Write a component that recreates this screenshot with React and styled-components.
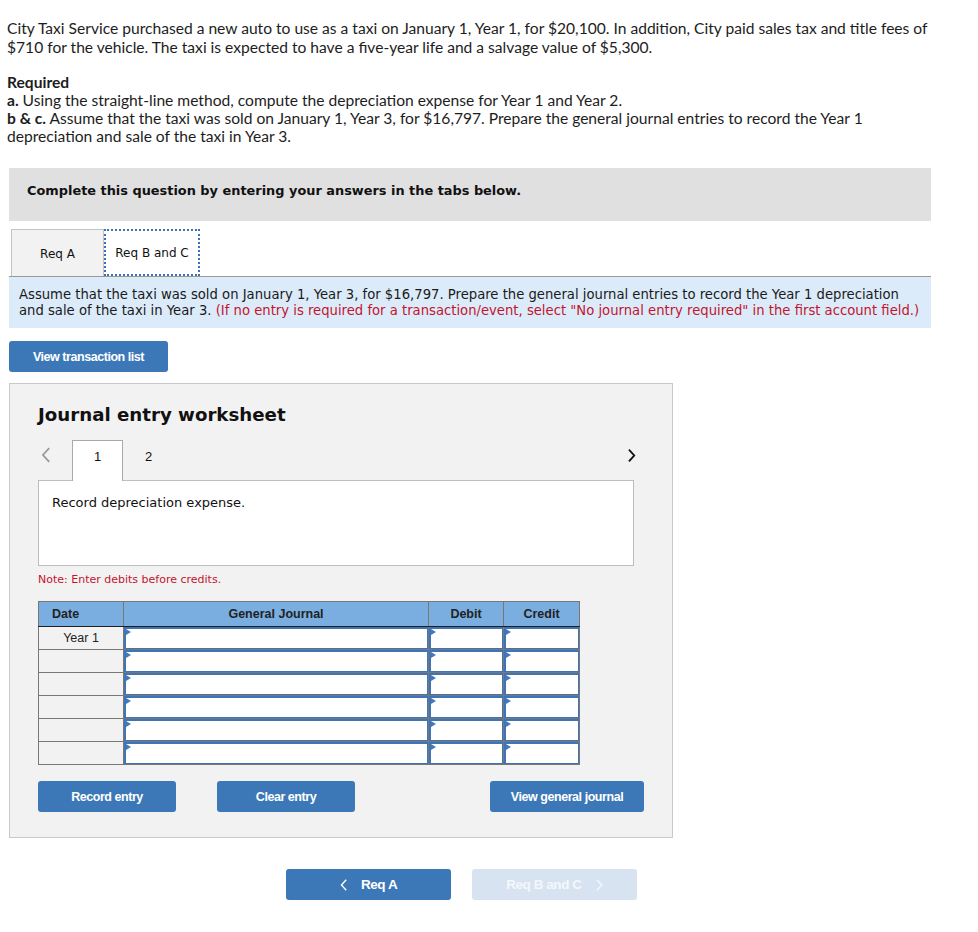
import React from "react";
import styled, { createGlobalStyle } from "styled-components";

const Global = createGlobalStyle`
  html, body { margin: 0; padding: 0; background: #fff; }
  body { font-family: "Lato", "Liberation Sans", sans-serif; color: #1a1a1a; }
  * { box-sizing: border-box; }
`;

const Page = styled.div`
  width: 978px;
  padding: 19px 47px 32px 9px;
`;

const Prose = styled.div`
  margin-left: -2px;
  font-family: "Lato", "Liberation Sans", sans-serif;
  font-size: 15.6px;
  color: #1d1d1d;
`;

const Para = styled.p`
  margin: 0 0 ${(p) => p.$gap || 0}px;
  line-height: ${(p) => p.$lh || 19}px;
`;

const Bold = styled.b`
  font-weight: 700;
`;

const Banner = styled.div`
  margin-top: 23px;
  height: 53px;
  background: #e0e0e0;
  padding: 14px 18px 0;
  font-family: "DejaVu Sans", Verdana, sans-serif;
  font-weight: 700;
  font-size: 12.9px;
  line-height: 18px;
  color: #111;
`;

const TabBar = styled.div`
  margin-top: 8px;
  display: flex;
  padding-left: 2px;
  border-bottom: 1px solid #9a9a9a;
`;

const Tab = styled.div`
  width: ${(p) => p.$w}px;
  height: 47px;
  display: flex;
  align-items: center;
  justify-content: center;
  padding-top: 1px;
  font-family: "DejaVu Sans", Verdana, sans-serif;
  font-size: 12px;
  color: #111;
  background: ${(p) => (p.$active ? "#fff" : "#f2f2f2")};
  border: ${(p) => (p.$active ? "2px dotted #3d6fb6" : "1px solid #c4c4c4")};
  border-bottom: ${(p) => (p.$active ? "2px dotted #3d6fb6" : "none")};
`;

const Info = styled.div`
  background: #dcebf9;
  padding: 10px 10px 9px;
  font-family: "DejaVu Sans", Verdana, sans-serif;
  font-size: 13.2px;
  line-height: 16px;
  color: #1a1a1a;
`;

const Red = styled.span`
  color: #c3142d;
`;

const Button = styled.button`
  display: inline-flex;
  align-items: center;
  justify-content: center;
  gap: 14px;
  width: ${(p) => p.$w}px;
  height: 31px;
  border: none;
  border-radius: 3px;
  background: ${(p) => (p.$disabled ? "#d7e3f1" : "#3c78b7")};
  color: ${(p) => (p.$disabled ? "#f4f7fb" : "#fff")};
  font-family: "Liberation Sans", Arial, sans-serif;
  font-weight: 700;
  font-size: ${(p) => p.$fs || 12.5}px;
  letter-spacing: -0.45px;
  padding: 0;
  cursor: pointer;
`;

const TopButtonRow = styled.div`
  margin-top: 13px;
`;

const Panel = styled.div`
  margin-top: 11px;
  width: 664px;
  background: #f2f2f2;
  border: 1px solid #c9c9c9;
  padding: 19px 28px 25px 28px;
`;

const Title = styled.h2`
  margin: 0;
  font-family: "DejaVu Sans", Verdana, sans-serif;
  font-weight: 700;
  font-size: 18.2px;
  line-height: 24px;
  color: #111;
`;

const EntryNav = styled.div`
  margin-top: 12px;
  display: flex;
  align-items: flex-end;
  height: 41px;
`;

const Chevron = styled.span`
  display: flex;
  align-items: center;
  height: 30px;
  align-self: flex-start;
  margin-top: 1px;
  width: ${(p) => p.$w}px;
  padding-left: ${(p) => p.$pl || 0}px;
`;

const EntryTab = styled.div`
  width: 51px;
  height: 41px;
  display: flex;
  justify-content: center;
  padding-top: 8px;
  font-family: "Liberation Sans", Arial, sans-serif;
  font-size: 13px;
  line-height: 15px;
  color: #111;
  margin-bottom: -1px;
  position: relative;
  z-index: 1;
  background: ${(p) => (p.$active ? "#fff" : "transparent")};
  border: ${(p) => (p.$active ? "1px solid #aaa" : "1px solid transparent")};
  border-bottom: none;
`;

const Spacer = styled.div`
  flex: ${(p) => (p.$w ? `0 0 ${p.$w}px` : 1)};
`;

const Desc = styled.div`
  width: 596px;
  height: 86px;
  background: #fff;
  border: 1px solid #bdbdbd;
  padding: 14px 13px;
  font-family: "DejaVu Sans", Verdana, sans-serif;
  font-size: 13px;
  line-height: 16px;
  color: #111;
`;

const Note = styled.div`
  margin-top: 7px;
  font-family: "DejaVu Sans", Verdana, sans-serif;
  font-size: 11px;
  line-height: 14px;
  color: #c3142d;
`;

const Table = styled.table`
  margin-top: 14px;
  border-collapse: collapse;
  width: 541px;
  table-layout: fixed;
  border: 1px solid #777;
`;

const Th = styled.th`
  height: 25px;
  background: #7aaee1;
  border: 1px solid #777;
  border-left: ${(p) => (p.$first ? "1px solid #777" : "1px solid #1e1e1e")};
  border-bottom: 1px solid #1e1e1e;
  font-family: "Liberation Sans", Arial, sans-serif;
  font-weight: 700;
  font-size: 12.5px;
  color: #222;
  text-align: ${(p) => p.$align || "center"};
  padding: 0 0 0 ${(p) => p.$pl || 0}px;
`;

const DateCell = styled.td`
  height: 23px;
  border: 1px solid #777;
  padding: 0;
  font-family: "Liberation Sans", Arial, sans-serif;
  font-size: 12.5px;
  color: #222;
  text-align: center;
`;

const InputCell = styled.td`
  height: 23px;
  border: 1px solid #777;
  padding: 0;
`;

const Field = styled.div`
  position: relative;
  height: 22px;
  background: #fff;
  border: 1px solid #3f74b6;
  border-left-width: 2px;
  border-top-width: 2px;
`;

const Marker = styled.span`
  position: absolute;
  left: 0;
  top: 0;
  width: 0;
  height: 0;
  border-top: 3px solid transparent;
  border-bottom: 3px solid transparent;
  border-left: 5px solid #3f7ac0;
`;

const ActionRow = styled.div`
  margin-top: 16px;
  display: flex;
  align-items: center;
`;

const BottomNav = styled.div`
  margin-top: 31px;
  display: flex;
  gap: 21px;
  padding-left: 277px;
`;

const ChevronIcon = ({ dir = "left", color = "#999", size = 14, stroke = 1.8 }) => (
  <svg width={size * 0.6} height={size} viewBox="0 0 8 14" fill="none">
    <path
      d={dir === "left" ? "M6.5 1.5 L1.5 7 L6.5 12.5" : "M1.5 1.5 L6.5 7 L1.5 12.5"}
      stroke={color}
      strokeWidth={stroke}
      strokeLinecap="square"
    />
  </svg>
);

const rows = ["Year 1", "", "", "", "", ""];

export default function App() {
  return (
    <>
      <Global />
      <Page>
        <Prose>
          <Para $gap={16}>
            City Taxi Service purchased a new auto to use as a taxi on January 1, Year 1, for $20,100. In addition,
            City paid sales tax and title fees of $710 for the vehicle. The taxi is expected to have a five-year life
            and a salvage value of $5,300.
          </Para>
          <Para $lh={18}>
            <Bold>Required</Bold>
            <br />
            <Bold>a.</Bold> Using the straight-line method, compute the depreciation expense for Year 1 and Year 2.
            <br />
            <Bold>b &amp; c.</Bold> Assume that the taxi was sold on January 1, Year 3, for $16,797. Prepare the general
            journal entries to record the Year 1 depreciation and sale of the taxi in Year 3.
          </Para>
        </Prose>

        <Banner>Complete this question by entering your answers in the tabs below.</Banner>

        <TabBar>
          <Tab $w={93}>Req A</Tab>
          <Tab $w={96} $active>
            Req B and C
          </Tab>
        </TabBar>

        <Info>
          Assume that the taxi was sold on January 1, Year 3, for $16,797. Prepare the general journal entries to record
          the Year 1 depreciation and sale of the taxi in Year 3.{" "}
          <Red>
            (If no entry is required for a transaction/event, select "No journal entry required" in the first account
            field.)
          </Red>
        </Info>

        <TopButtonRow>
          <Button $w={159}>View transaction list</Button>
        </TopButtonRow>

        <Panel>
          <Title>Journal entry worksheet</Title>

          <EntryNav>
            <Chevron $w={34} $pl={3}>
              <ChevronIcon dir="left" color="#9a9a9a" size={16} stroke={1.6} />
            </Chevron>
            <EntryTab $active>1</EntryTab>
            <EntryTab>2</EntryTab>
            <Spacer />
            <Chevron $w={16}>
              <ChevronIcon dir="right" color="#111" size={13} stroke={2} />
            </Chevron>
          </EntryNav>

          <Desc>Record depreciation expense.</Desc>

          <Note>Note: Enter debits before credits.</Note>

          <Table>
            <colgroup>
              <col style={{ width: 85 }} />
              <col style={{ width: 305 }} />
              <col style={{ width: 75 }} />
              <col style={{ width: 76 }} />
            </colgroup>
            <thead>
              <tr>
                <Th $first $align="left" $pl={13}>
                  Date
                </Th>
                <Th>General Journal</Th>
                <Th>Debit</Th>
                <Th>Credit</Th>
              </tr>
            </thead>
            <tbody>
              {rows.map((d, i) => (
                <tr key={i}>
                  <DateCell>{d}</DateCell>
                  {[0, 1, 2].map((c) => (
                    <InputCell key={c}>
                      <Field>
                        <Marker />
                      </Field>
                    </InputCell>
                  ))}
                </tr>
              ))}
            </tbody>
          </Table>

          <ActionRow>
            <Button $w={138}>Record entry</Button>
            <Spacer $w={41} />
            <Button $w={138}>Clear entry</Button>
            <Spacer />
            <Button $w={154}>View general journal</Button>
          </ActionRow>
        </Panel>

        <BottomNav>
          <Button $w={165} $fs={13.5}>
            <ChevronIcon dir="left" color="#fff" size={12} stroke={1.6} />
            Req A
          </Button>
          <Button $w={165} $fs={13.5} $disabled>
            Req B and C
            <ChevronIcon dir="right" color="#f4f7fb" size={12} stroke={1.6} />
          </Button>
        </BottomNav>
      </Page>
    </>
  );
}
